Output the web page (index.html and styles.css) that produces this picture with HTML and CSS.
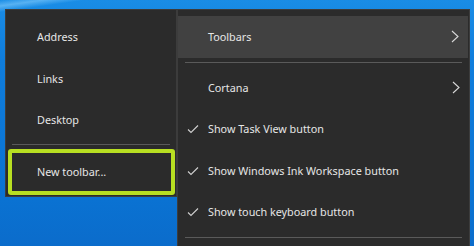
FILE: index.html
```html
<!DOCTYPE html>
<html lang="en">
<head>
    <meta charset="UTF-8">
    <title>Taskbar context menu</title>
    <link rel="stylesheet" href="styles.css">
</head>
<body>
    <div class="desktop">
        <ul class="menu submenu">
            <li class="menu-item">Address</li>
            <li class="menu-item">Links</li>
            <li class="menu-item">Desktop</li>
            <li class="separator"></li>
            <li class="menu-item highlight">New toolbar...</li>
        </ul>

        <ul class="menu main-menu">
            <li class="menu-item hover">
                Toolbars
                <svg class="chevron" width="8" height="13" viewBox="0 0 8 13"><path d="M1 1 L7 6.5 L1 12" fill="none" stroke="#d8d8d8" stroke-width="1.1"/></svg>
            </li>
            <li class="separator"></li>
            <li class="menu-item">
                Cortana
                <svg class="chevron" width="8" height="13" viewBox="0 0 8 13"><path d="M1 1 L7 6.5 L1 12" fill="none" stroke="#d8d8d8" stroke-width="1.1"/></svg>
            </li>
            <li class="menu-item">
                <svg class="check" width="12" height="10" viewBox="0 0 12 10"><path d="M1 5.5 L4 8.5 L11 1.5" fill="none" stroke="#cfcfcf" stroke-width="1.1"/></svg>
                Show Task View button
            </li>
            <li class="menu-item">
                <svg class="check" width="12" height="10" viewBox="0 0 12 10"><path d="M1 5.5 L4 8.5 L11 1.5" fill="none" stroke="#cfcfcf" stroke-width="1.1"/></svg>
                Show Windows Ink Workspace button
            </li>
            <li class="menu-item">
                <svg class="check" width="12" height="10" viewBox="0 0 12 10"><path d="M1 5.5 L4 8.5 L11 1.5" fill="none" stroke="#cfcfcf" stroke-width="1.1"/></svg>
                Show touch keyboard button
            </li>
            <li class="separator"></li>
        </ul>
    </div>
</body>
</html>
```

FILE: styles.css
```css
body {
    margin: 0;
    width: 474px;
    height: 246px;
    overflow: hidden;
    font-family: 'Noto Sans', 'Open Sans', sans-serif;
    background:
        linear-gradient(172deg, rgba(150, 215, 255, 0) 0px, rgba(150, 215, 255, 0.5) 6px, rgba(150, 215, 255, 0) 12px),
        linear-gradient(180deg, #1a8de6 0px, #0f7ddc 60px, #0a72d2 200px, #0b6ccb 246px);
}

.desktop {
    display: flex;
    align-items: flex-start;
    padding: 9px 0 0 5px;
}

.menu {
    list-style: none;
    margin: 0;
    background-color: #2b2b2b;
    border: 1px solid #3c3c3c;
    color: #e6e6e6;
    font-size: 10.8px;
}

.submenu {
    width: 170px;
    padding: 6px 0 1px 0;
}

.main-menu {
    width: 291px;
    height: 230px;
    padding: 6px 0 0 0;
    border-bottom: none;
    overflow: hidden;
}

.menu-item {
    height: 41.5px;
    display: flex;
    align-items: center;
    padding-left: 31px;
    position: relative;
}

.main-menu .menu-item {
    padding-left: 30px;
}

.hover {
    background-color: #414141;
    margin: 0 1px 0 0;
}

.separator {
    height: 1px;
    background-color: #5a5a5a;
    margin: 3.5px 6px 3.5px 6px;
}

.main-menu .separator {
    margin: 4px 7px 4px 7px;
}

.highlight {
    height: 38px;
    margin: 0 1px 0 2px;
    padding-left: 25px;
    border: 4px solid #b8df22;
    border-radius: 3px;
}

.chevron {
    position: absolute;
    right: 9px;
    top: 14px;
}

.check {
    position: absolute;
    left: 9px;
    top: 16px;
}
```
